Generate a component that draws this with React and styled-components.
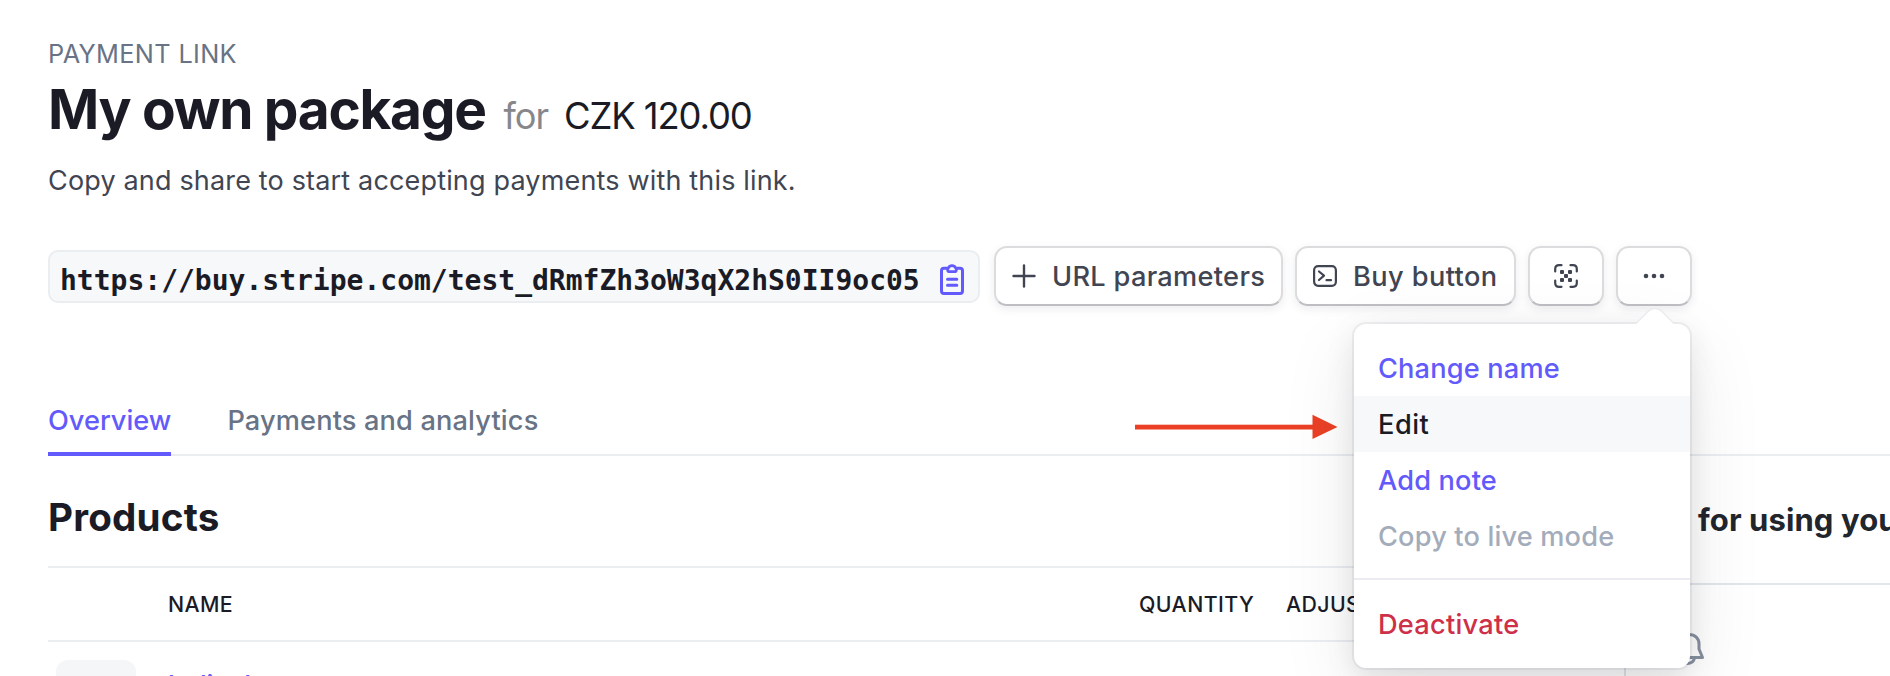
import React from "react";
import styled, { createGlobalStyle } from "styled-components";

const Global = createGlobalStyle`
  * { box-sizing: border-box; }
  body { margin: 0; background: #fff; overflow: hidden; font-family: Inter, "Liberation Sans", sans-serif; color: #1a1b25; }
`;
const Page = styled.div`
  height: 676px;
  overflow: hidden;
  padding: 36px 0 0 48px;
`;
const Text = styled.span`
  display: block;
  margin: 0;
  white-space: nowrap;
  font-size: ${(p) => p.$size}px;
  line-height: ${(p) => p.$line || 36}px;
  font-weight: ${(p) => p.$weight || 400};
  letter-spacing: ${(p) => p.$track || 0}px;
  color: ${(p) => p.$color || "#1a1b25"};
`;
const TitleRow = styled.div`
  display: flex;
  align-items: baseline;
  height: 72px;
`;
const Price = styled.div`
  display: flex;
  gap: 16px;
  margin-left: 18px;
`;
const Subtitle = styled.div`
  height: 36px;
  padding-top: 1px;
  margin-top: 18px;
`;
const Toolbar = styled.div`
  display: flex;
  align-items: flex-start;
  margin-top: 48px;
  height: 60px;
`;
const LinkField = styled.div`
  display: flex;
  align-items: center;
  width: 932px;
  height: 53px;
  margin: 4px 14px 0 0;
  padding-left: 10px;
  gap: 19px;
  border: 2px solid #ebeef1;
  border-radius: 10px;
  background: #f6f8fa;

  svg {
    margin-top: 5px;
  }
`;
const Url = styled.code`
  font: bold 28px/36px "DejaVu Sans Mono", monospace;
  padding-top: 8px;
`;
const Button = styled.div`
  position: relative;
  display: flex;
  align-items: center;
  width: ${(p) => p.$width}px;
  height: 60px;
  margin-right: 12px;
  padding-left: ${(p) => p.$pad}px;
  gap: ${(p) => p.$gap || 0}px;
  border: 2px solid #dcdcdf;
  border-bottom-color: #bfbfc3;
  border-radius: 13px;
  background: #fff;
  box-shadow: 0 3px 8px rgba(60, 66, 87, 0.1);

  > span {
    padding-top: 2px;
  }
`;
const Tabs = styled.div`
  display: flex;
  gap: 56px;
  margin-top: 96px;
  height: 54px;
  box-shadow: inset 0 -2px #ebeef1;
`;
const Tab = styled.div`
  height: 54px;
  padding-top: 1px;
  border-bottom: ${(p) => (p.$active ? "4px solid #625afa" : "0")};
`;
const Columns = styled.div`
  display: flex;
`;
const Products = styled.section`
  width: 1532px;
`;
const SectionHead = styled.div`
  height: 112px;
  padding-top: 37px;
  border-bottom: 2px solid #ebeef1;
`;
const HeadRow = styled.div`
  display: grid;
  grid-template-columns: 120px 971px 147px 1fr;
  align-items: center;
  height: 74px;
  border-bottom: 2px solid #ebeef1;
`;
const Row = styled.div`
  display: flex;
  padding: 18px 0 0 8px;
  gap: 32px;

  > span {
    padding-top: 8px;
  }
`;
const Thumb = styled.div`
  width: 80px;
  height: 80px;
  border-radius: 12px;
  background: #f5f6f8;
`;
const Tips = styled.aside`
  width: 266px;
  margin-left: 44px;
  border-left: 2px solid #dfe4ea;
  overflow: hidden;
`;
const TipsHead = styled.div`
  height: 129px;
  padding: 42px 0 0 72px;
  border-bottom: 2px solid #e0e6eb;
`;
const TipsIcon = styled.div`
  padding: 47px 0 0 47px;
`;
const Menu = styled.div`
  position: absolute;
  z-index: 2;
  top: 76px;
  right: 0;
  width: 336px;
  height: 344px;
  padding: 16px 0;
  border-radius: 12px;
  background: #fff;
  box-shadow: 0 0 0 2px rgba(60, 66, 87, 0.07), 0 10px 30px rgba(0, 0, 0, 0.1), 0 24px 80px rgba(48, 49, 61, 0.09);
`;
const MenuItem = styled.div`
  display: flex;
  align-items: center;
  height: 56px;
  padding: 2px 0 0 24px;
  background: ${(p) => (p.$active ? "#f6f8fa" : "transparent")};
`;
const Divider = styled.div`
  height: 2px;
  margin: 14px 0 16px;
  background: #ebebf2;
`;
const Notch = styled.svg`
  position: absolute;
  right: 16px;
  top: -17px;
`;
const Arrow = styled.svg`
  position: absolute;
  left: 1135px;
  top: 414px;
`;

const Clipboard = () => (
  <svg width="26" height="34" viewBox="0 0 26 34" fill="none" stroke="#625afa" strokeWidth="3" strokeLinecap="round" strokeLinejoin="round">
    <path d="M7.500 6.300H5Q2.500 6.300 2.500 8.800V29Q2.500 31.500 5 31.500H21Q23.500 31.500 23.500 29V8.800Q23.500 6.300 21 6.300H18.500" />
    <path d="M8.700 6.300H9.200A4 4 0 0 1 16.800 6.300H17.300V8Q17.300 9.700 15.600 9.700H10.400Q8.700 9.700 8.700 8Z" strokeWidth="2.800" />
    <path d="M8.500 17.300H17.800M8.500 23.300H17.800" />
  </svg>
);
const Plus = () => (
  <svg width="24" height="24" viewBox="0 0 24 24" stroke="#414552" strokeWidth="2.4" strokeLinecap="round">
    <path d="M12 1.500V22.500M1.500 12H22.500" />
  </svg>
);
const Terminal = () => (
  <svg width="24" height="22" viewBox="0 0 24 22" fill="none" stroke="#414552" strokeWidth="2.2" strokeLinecap="round" strokeLinejoin="round">
    <rect x="1.100" y="1.200" width="21.800" height="19.600" rx="4" />
    <path d="M6 6.500L11 10.700L6 15M13.500 15.200H18" />
  </svg>
);
const Qr = () => (
  <svg width="24" height="24" viewBox="0 0 24 24" fill="none" stroke="#414552" strokeWidth="2.200" strokeLinecap="round">
    <path d="M1.200 7.500V5Q1.200 1.200 5 1.200H7.500M16.500 1.200H19Q22.800 1.200 22.800 5V7.500M22.800 16.500V19Q22.800 22.800 19 22.800H16.500M7.500 22.800H5Q1.200 22.800 1.200 19V16.500" />
    <g fill="#414552" stroke="none">
      <rect x="6" y="6" width="4" height="4" rx="1" />
      <rect x="14" y="6" width="4" height="4" rx="1" />
      <rect x="10" y="10" width="4" height="4" rx="1" />
      <rect x="6" y="14" width="4" height="4" rx="1" />
      <rect x="14" y="14" width="4" height="4" rx="1" />
    </g>
  </svg>
);
const Dots = () => (
  <svg width="22" height="6" viewBox="0 0 22 6" fill="#414552">
    <circle cx="3" cy="3" r="2.300" />
    <circle cx="11" cy="3" r="2.300" />
    <circle cx="19" cy="3" r="2.300" />
  </svg>
);
const Bell = () => (
  <svg width="32" height="34" viewBox="0 0 32 34" fill="none" stroke="#87909f" strokeWidth="3" strokeLinejoin="round">
    <path d="M16 2.500C10 2.500 6.500 6.500 6.500 12V17L2.500 25.500H29.500L26 17V12C26 6.500 22 2.500 16 2.500Z" />
    <path d="M21.500 26Q20.500 31.500 14 31.500Q11 31.500 10.500 26" />
  </svg>
);

const items = [
  { label: "Change name", color: "#625afa" },
  { label: "Edit", color: "#1a1b25", active: true, track: 0.5 },
  { label: "Add note", color: "#625afa" },
  { label: "Copy to live mode", color: "#a3acba" },
];

export default function App() {
  return (
    <Page>
      <Global />
      <Text $size={25.3} $track={0.35} $color="#687385">PAYMENT LINK</Text>
      <TitleRow>
        <Text as="h1" $size={55} $weight={700} $line={74} $track={-1.3}>My own package</Text>
        <Price>
          <Text $size={36.2} $track={-1.1} $color="#87878b">for</Text>
          <Text $size={36.4} $track={-1.1}>CZK 120.00</Text>
        </Price>
      </TitleRow>
      <Subtitle>
        <Text $size={27} $track={0.165} $color="#414552">Copy and share to start accepting payments with this link.</Text>
      </Subtitle>
      <Toolbar>
        <LinkField>
          <Url>https://buy.stripe.com/test_dRmfZh3oW3qX2hS0II9oc05</Url>
          <Clipboard />
        </LinkField>
        <Button $width={289} $pad={16} $gap={16}>
          <Plus />
          <Text $size={27.2} $weight={500} $track={0.3} $color="#414552">URL parameters</Text>
        </Button>
        <Button $width={221} $pad={16} $gap={16}>
          <Terminal />
          <Text $size={27.2} $weight={500} $track={0.4} $color="#414552">Buy button</Text>
        </Button>
        <Button $width={76} $pad={24}>
          <Qr />
        </Button>
        <Button $width={76} $pad={25}>
          <Dots />
          <Menu>
            <Notch width="38" height="20" viewBox="0 0 38 20">
              <path d="M0 17L11 5.500Q19 -2.500 27 5.500L38 17V20H0Z" fill="#fff" />
              <path d="M0 16.500L11 5.500Q19 -2.500 27 5.500L38 16.500" fill="none" stroke="#ebebf0" strokeWidth="1.500" />
            </Notch>
            {items.map((i) => (
              <MenuItem key={i.label} $active={i.active}>
                <Text $size={27.2} $weight={500} $color={i.color} $track={i.track || 0.16}>{i.label}</Text>
              </MenuItem>
            ))}
            <Divider />
            <MenuItem>
              <Text $size={27.2} $weight={500} $track={0.25} $color="#cd3048">Deactivate</Text>
            </MenuItem>
          </Menu>
        </Button>
      </Toolbar>
      <Tabs>
        <Tab $active>
          <Text $size={27.2} $weight={500} $color="#625afa">Overview</Text>
        </Tab>
        <Tab>
          <Text $size={27.2} $weight={500} $track={0.14} $color="#687385">Payments and analytics</Text>
        </Tab>
      </Tabs>
      <Columns>
        <Products>
          <SectionHead>
            <Text as="h2" $size={38.6} $weight={700} $line={48} $track={0.2}>Products</Text>
          </SectionHead>
          <HeadRow>
            <span />
            <Text $size={21.3} $weight={500} $track={0.35}>NAME</Text>
            <Text $size={21.3} $weight={500} $track={0.45}>QUANTITY</Text>
            <Text $size={21.3} $weight={500} $track={0.4}>ADJUSTABLE QUANTITY</Text>
          </HeadRow>
          <Row>
            <Thumb />
            <Text $size={27.2} $weight={500} $track={-0.25} $color="#625afa">balicek</Text>
          </Row>
        </Products>
        <Tips>
          <TipsHead>
            <Text as="h3" $size={31} $weight={700} $line={44} $track={0.1} $color="#21252c">for using your payment link</Text>
          </TipsHead>
          <TipsIcon>
            <Bell />
          </TipsIcon>
        </Tips>
      </Columns>
      <Arrow width="204" height="26" viewBox="0 0 204 26" fill="#eb4025">
        <rect x="0" y="10.700" width="180" height="4.800" />
        <path d="M177.500 0.700L202.500 13L177.500 25Z" />
      </Arrow>
    </Page>
  );
}
